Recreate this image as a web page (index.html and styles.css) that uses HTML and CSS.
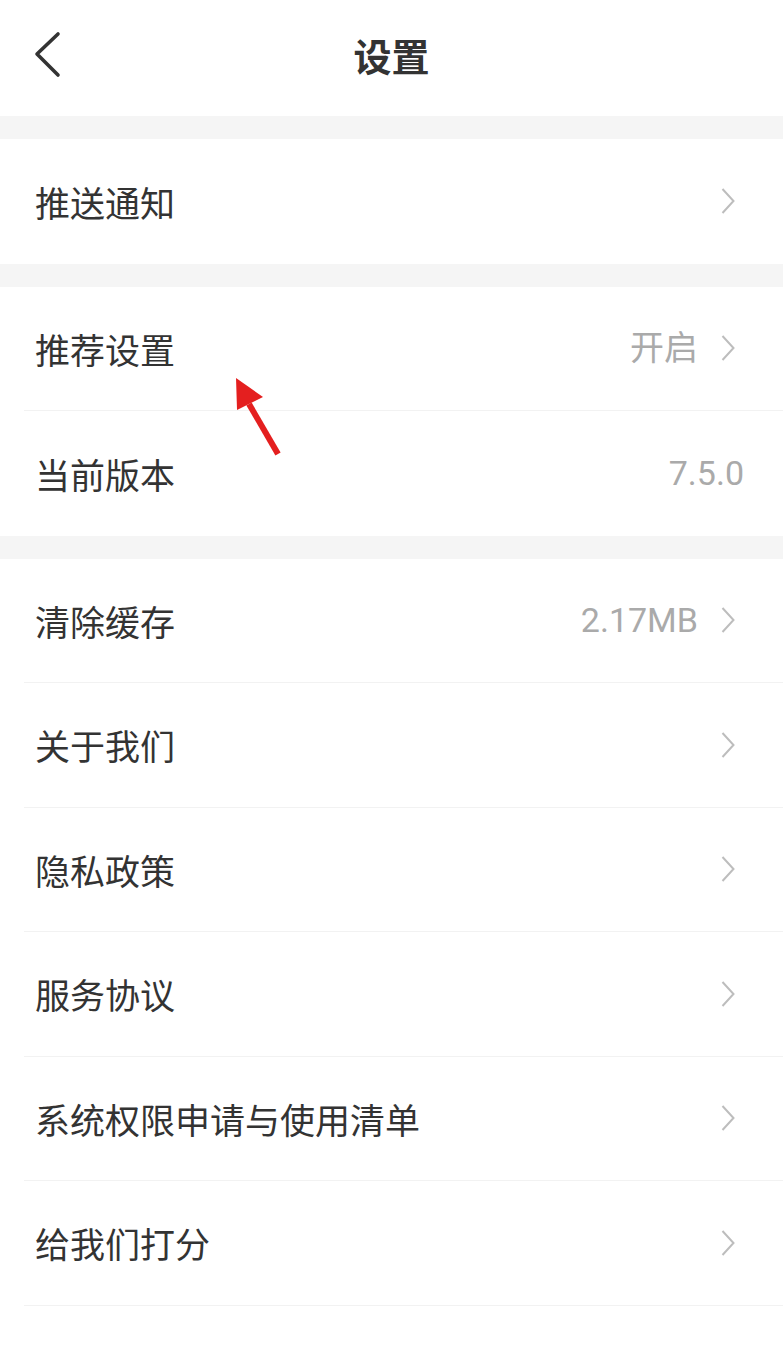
FILE: index.html
```html
<!DOCTYPE html>
<html lang="zh-CN">
<head>
<meta charset="utf-8">
<title>设置</title>
<link rel="stylesheet" href="styles.css">
</head>
<body>
<div class="page">
  <header class="topbar">
    <svg class="back" width="30" height="50" viewBox="0 0 30 50"><path d="M25 3 L4 23 L25 44" fill="none" stroke="#333" stroke-width="3.6" stroke-linecap="round" stroke-linejoin="round"/></svg>
    <h1 class="title">设置</h1>
  </header>
  <div class="band"></div>
  <section class="group">
    <div class="row last"><span class="label">推送通知</span><span class="right"><svg class="chev" width="14" height="26" viewBox="0 0 14 26"><path d="M1.5 1 L12.5 13 L1.5 25" fill="none" stroke="#bdbdbd" stroke-width="2"/></svg></span></div>
  </section>
  <div class="band"></div>
  <section class="group">
    <div class="row"><span class="label">推荐设置</span><span class="right"><span class="value">开启</span><svg class="chev" width="14" height="26" viewBox="0 0 14 26"><path d="M1.5 1 L12.5 13 L1.5 25" fill="none" stroke="#bdbdbd" stroke-width="2"/></svg></span></div>
    <div class="row last"><span class="label">当前版本</span><span class="right"><span class="value">7.5.0</span></span></div>
  </section>
  <div class="band"></div>
  <section class="group">
    <div class="row"><span class="label">清除缓存</span><span class="right"><span class="value">2.17MB</span><svg class="chev" width="14" height="26" viewBox="0 0 14 26"><path d="M1.5 1 L12.5 13 L1.5 25" fill="none" stroke="#bdbdbd" stroke-width="2"/></svg></span></div>
    <div class="row"><span class="label">关于我们</span><span class="right"><svg class="chev" width="14" height="26" viewBox="0 0 14 26"><path d="M1.5 1 L12.5 13 L1.5 25" fill="none" stroke="#bdbdbd" stroke-width="2"/></svg></span></div>
    <div class="row"><span class="label">隐私政策</span><span class="right"><svg class="chev" width="14" height="26" viewBox="0 0 14 26"><path d="M1.5 1 L12.5 13 L1.5 25" fill="none" stroke="#bdbdbd" stroke-width="2"/></svg></span></div>
    <div class="row"><span class="label">服务协议</span><span class="right"><svg class="chev" width="14" height="26" viewBox="0 0 14 26"><path d="M1.5 1 L12.5 13 L1.5 25" fill="none" stroke="#bdbdbd" stroke-width="2"/></svg></span></div>
    <div class="row"><span class="label">系统权限申请与使用清单</span><span class="right"><svg class="chev" width="14" height="26" viewBox="0 0 14 26"><path d="M1.5 1 L12.5 13 L1.5 25" fill="none" stroke="#bdbdbd" stroke-width="2"/></svg></span></div>
    <div class="row"><span class="label">给我们打分</span><span class="right"><svg class="chev" width="14" height="26" viewBox="0 0 14 26"><path d="M1.5 1 L12.5 13 L1.5 25" fill="none" stroke="#bdbdbd" stroke-width="2"/></svg></span></div>
  </section>
  <svg class="pointer" width="60" height="90" viewBox="0 0 60 90"><path d="M49 84 L20 34" stroke="#e41f1f" stroke-width="6" stroke-linecap="butt"/><polygon points="7,8 34,27 8,40" fill="#e41f1f"/></svg>
</div>
</body>
</html>
```

FILE: styles.css
```css
* { box-sizing: border-box; }
html, body { margin: 0; padding: 0; background: #ffffff; }
body {
  font-family: Roboto, "Noto Sans CJK SC", "Noto Sans", sans-serif;
  color: #333333;
}
.page {
  position: relative;
  width: 783px;
  min-height: 1347px;
  background: #ffffff;
}
.topbar {
  height: 116px;
  display: flex;
  align-items: center;
  justify-content: center;
  position: relative;
}
.back {
  position: absolute;
  left: 33px;
  top: 31px;
}
.title {
  margin: 0;
  font-size: 38px;
  font-weight: 700;
  color: #333333;
  font-family: "Noto Sans CJK SC", sans-serif;
  line-height: 1;
  margin-top: -6px;
}
.band {
  height: 23px;
  background: #f5f5f5;
}
.group {
  background: #ffffff;
}
.row {
  height: 124.5px;
  margin-left: 24px;
  padding: 0 39px 0 11px;
  border-bottom: 1px solid #f2f2f2;
  display: flex;
  align-items: center;
  justify-content: space-between;
}
.row.last { border-bottom: none; }
.label {
  font-size: 35px;
  color: #333333;
  font-family: "Noto Sans CJK SC", sans-serif;
  line-height: 1;
}
.right {
  display: flex;
  align-items: center;
  gap: 23px;
}
.value {
  font-size: 34px;
  color: #aaaaaa;
  line-height: 1;
}
.chev {
  display: block;
  margin-right: 9px;
}
.pointer {
  position: absolute;
  left: 229px;
  top: 370px;
}
```
